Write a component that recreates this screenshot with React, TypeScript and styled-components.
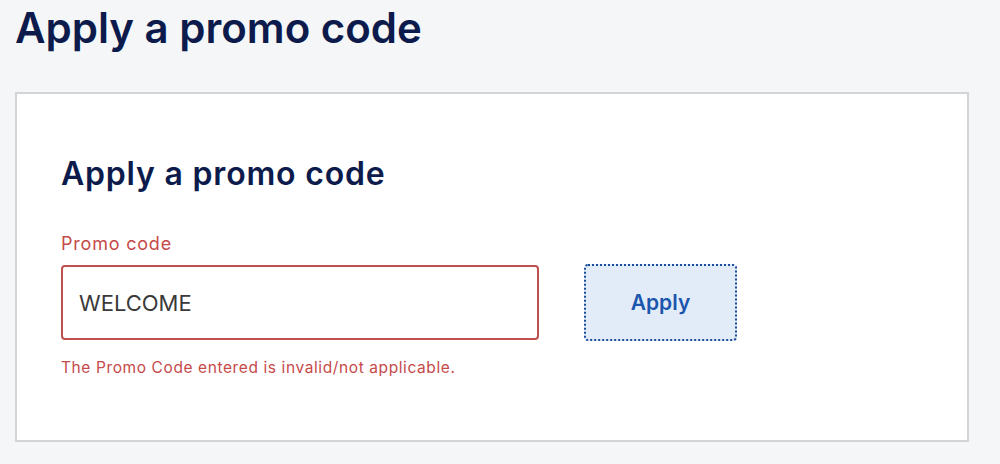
import React from "react";
import styled, { createGlobalStyle } from "styled-components";

const Global = createGlobalStyle`
  html, body { margin: 0; padding: 0; background: #f5f6f8; }
  body { font-family: "Inter", "Liberation Sans", sans-serif; }
`;

const Page = styled.div`
  width: 1000px;
  height: 464px;
  box-sizing: border-box;
  padding: 0 31px 0 15px;
  overflow: hidden;
`;

const PageTitle = styled.h1`
  margin: 0;
  padding: 2px 0 0 0;
  height: 92px;
  box-sizing: border-box;
  font-size: 42px;
  font-weight: 600;
  color: #0c1b4b;
  line-height: 52px;
`;

const Card = styled.section`
  background: #fff;
  border: 2px solid #d3d4d7;
  height: 350px;
  box-sizing: border-box;
  padding: 60px 44px 0 44px;
`;

const CardTitle = styled.h2`
  margin: 0 0 39px 0;
  font-size: 32px;
  font-weight: 600;
  letter-spacing: 0.8px;
  color: #0c1b4b;
  line-height: 40px;
`;

const Label = styled.label`
  display: block;
  font-size: 18px;
  letter-spacing: 0.8px;
  color: #c54a4a;
  line-height: 22px;
  margin-bottom: 9px;
`;

const Row = styled.div`
  display: flex;
  align-items: center;
  gap: 45px;
`;

const Input = styled.input`
  width: 478px;
  height: 75px;
  box-sizing: border-box;
  border: 2px solid #c0504d;
  border-radius: 4px;
  padding: 0 16px;
  font-family: inherit;
  font-size: 22px;
  color: #3a3a3a;
  outline: none;
  background: #fff;
`;

const Button = styled.button`
  width: 153px;
  height: 77px;
  box-sizing: border-box;
  background: #e2ecf9;
  border: 2px dotted #1c4d9a;
  border-radius: 4px;
  font-family: inherit;
  font-size: 21px;
  font-weight: 600;
  color: #1b56ac;
  cursor: pointer;
`;

const ErrorText = styled.p`
  margin: 17px 0 0 0;
  font-size: 15.5px;
  letter-spacing: 0.6px;
  color: #c54a4a;
  line-height: 20px;
`;

export default function App() {
  return (
    <Page>
      <Global />
      <PageTitle>Apply a promo code</PageTitle>
      <Card>
        <CardTitle>Apply a promo code</CardTitle>
        <Label htmlFor="promo">Promo code</Label>
        <Row>
          <Input id="promo" defaultValue="WELCOME" />
          <Button>Apply</Button>
        </Row>
        <ErrorText>The Promo Code entered is invalid/not applicable.</ErrorText>
      </Card>
    </Page>
  );
}
